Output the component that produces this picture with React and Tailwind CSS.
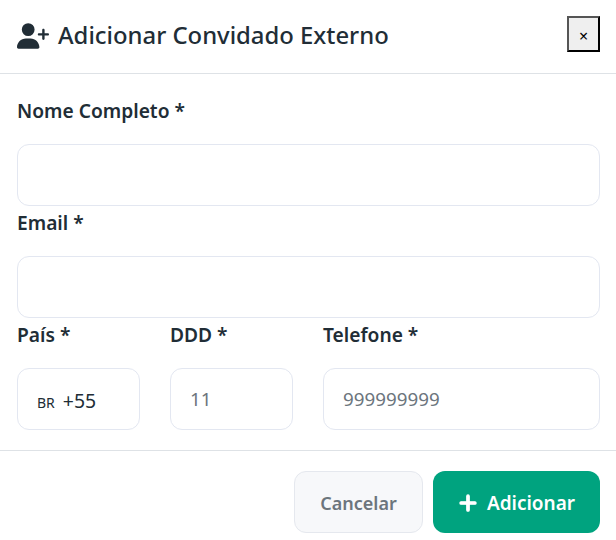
import React from "react";
import { FaUserPlus, FaPlus } from "react-icons/fa6";

const labelCls = "block text-[19.2px] leading-[26px] font-semibold text-[#212d36]";
const inputCls =
  "block w-full h-[62px] px-[19px] rounded-xl border border-[#e3e7f1] bg-white text-[18.8px] text-[#212d36] placeholder-[#6c757d] outline-none";

function Field({ label, className = "", children }) {
  return (
    <div className={className}>
      <label className={`${labelCls} mb-[20px]`}>{label}</label>
      {children}
    </div>
  );
}

export default function App() {
  return (
    <div className="w-[616px] h-[540px] bg-white overflow-hidden font-['Noto_Sans',sans-serif]">
      {/* Header */}
      <div className="h-[74px] pl-[17px] pr-4 pt-4 flex items-start justify-between border-b border-[#dee2e6]">
        <h2 className="flex items-center gap-[9px] h-[39px] text-[23.85px] font-medium text-[#212d36]">
          <FaUserPlus className="w-8 h-[26px]" />
          Adicionar Convidado Externo
        </h2>
        <button className="w-[33px] h-9 pt-1 flex items-center justify-center bg-[#efefef] border-2 border-t-[#555555] border-l-[#555555] border-r-black border-b-black text-[16px] text-black">
          ×
        </button>
      </div>

      {/* Form */}
      <div className="pl-[17px] pr-4 pt-[24px] pb-5 border-b border-[#dee2e6]">
        <Field label="Nome Completo *">
          <input className={inputCls} />
        </Field>
        <Field label="Email *" className="mt-[4px]">
          <input className={inputCls} />
        </Field>
        <div className="mt-[4px] flex gap-[30px]">
          <Field label="País *" className="w-[123px]">
            <div className={`${inputCls} flex items-baseline gap-[8px] pt-[17px]`}>
              <span className="text-[14px]">BR</span>
              <span className="text-[19.4px]">+55</span>
            </div>
          </Field>
          <Field label="DDD *" className="w-[123px]">
            <input className={inputCls} placeholder="11" />
          </Field>
          <Field label="Telefone *" className="flex-1">
            <input className={inputCls} placeholder="999999999" />
          </Field>
        </div>
      </div>

      {/* Footer */}
      <div className="pr-4 pt-5 flex justify-end gap-[10px]">
        <button className="w-[129px] h-[62px] pt-[2px] rounded-xl border border-[#e5e8ee] bg-[#f7f8fa] text-[18px] font-semibold text-[#6c757d]">
          Cancelar
        </button>
        <button className="w-[167px] h-[62px] pt-[2px] rounded-xl bg-[#00a37f] text-[19px] font-semibold text-white flex items-center justify-center gap-[9px]">
          <FaPlus className="w-[20px] h-[20px]" stroke="currentColor" strokeWidth={30} />
          Adicionar
        </button>
      </div>
    </div>
  );
}
